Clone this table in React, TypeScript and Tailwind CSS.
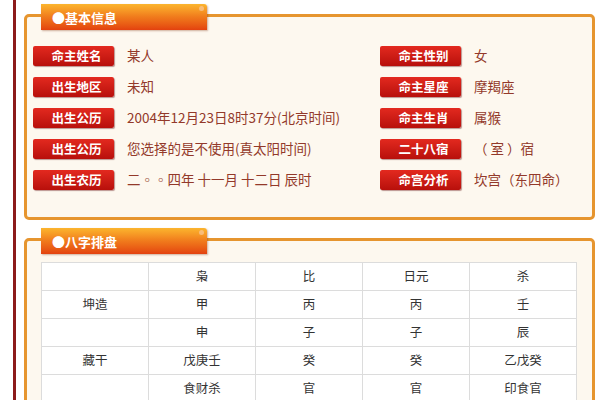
import React from 'react';

const font = { fontFamily: '"Microsoft YaHei", "Noto Sans CJK SC", "Noto Sans", sans-serif' };

const leftRows = [
  { label: '命主姓名', value: '某人' },
  { label: '出生地区', value: '未知' },
  { label: '出生公历', value: '2004年12月23日8时37分(北京时间)' },
  { label: '出生公历', value: '您选择的是不使用(真太阳时间)' },
  { label: '出生农历', value: '二◦◦四年 十一月 十二日 辰时' },
];

const rightRows = [
  { label: '命主性别', value: '女' },
  { label: '命主星座', value: '摩羯座' },
  { label: '命主生肖', value: '属猴' },
  { label: '二十八宿', value: '（ 室 ）宿' },
  { label: '命宫分析', value: '坎宫（东四命）' },
];

const table = [
  ['', '枭', '比', '日元', '杀'],
  ['坤造', '甲', '丙', '丙', '壬'],
  ['', '申', '子', '子', '辰'],
  ['藏干', '戊庚壬', '癸', '癸', '乙戊癸'],
  ['', '食财杀', '官', '官', '印食官'],
];

// orange tab sitting on the panel's top border
const Tab = ({ title }: { title: string }) => (
  <div className="absolute left-[14px] top-[-13px] w-[166px] h-[26px] rounded-tr-[3px] bg-gradient-to-b from-[#fbb52e] via-[#f07a1c] to-[#e3410f] shadow-[1px_1px_2px_rgba(120,40,0,0.35)] flex items-center pl-[11px]">
    <span className="text-white font-bold text-[13px] leading-none">●{title}</span>
    <span className="absolute right-[3px] top-[2px] w-[5px] h-[5px] rounded-full bg-[#f9c89a]/70"></span>
  </div>
);

const Label = ({ text }: { text: string }) => (
  <div className="w-[81px] h-[20px] shrink-0 rounded-[2px] bg-gradient-to-b from-[#e3291f] to-[#b80f0b] shadow-[1px_1px_1px_rgba(90,0,0,0.4)] flex items-center justify-center pl-[6px]">
    <span className="text-white font-bold text-[12.5px] leading-none">{text}</span>
  </div>
);

const Row = ({ label, value }: { label: string; value: string }) => (
  <div className="flex items-center h-[20px]">
    <Label text={label} />
    <span className="ml-[13px] text-[13.5px] text-[#93392a] whitespace-nowrap leading-none">{value}</span>
  </div>
);

export default function App() {
  return (
    <div className="w-[600px] h-[400px] overflow-hidden bg-white" style={font}>
      <div className="ml-[13px] h-full border-l-[3px] border-[#8c1b1b] pl-[8px] pt-[14px]">
        {/* 基本信息 */}
        <div className="relative w-[571px] h-[206px] border-[3px] border-[#e6952f] rounded-[5px] bg-[#fdf8ef]">
          <Tab title="基本信息" />
          <div className="flex pt-[29px] pl-[6px]">
            <div className="w-[347px] flex flex-col gap-[11px]">
              {leftRows.map((r, i) => (
                <Row key={i} label={r.label} value={r.value} />
              ))}
            </div>
            <div className="flex flex-col gap-[11px]">
              {rightRows.map((r, i) => (
                <Row key={i} label={r.label} value={r.value} />
              ))}
            </div>
          </div>
        </div>

        {/* 八字排盘 */}
        <div className="relative mt-[18px] w-[571px] h-[200px] border-[3px] border-[#e6952f] rounded-[5px] bg-[#fdf8ef]">
          <Tab title="八字排盘" />
          <div className="pt-[21px] pl-[14px]">
            <table className="w-[536px] border-collapse bg-white table-fixed">
              <tbody>
                {table.map((row, i) => (
                  <tr key={i} className="h-[28px]">
                    {row.map((c, j) => (
                      <td key={j} className="border border-[#dcdcdc] text-center text-[12.5px] text-[#333] p-0">
                        {c}
                      </td>
                    ))}
                  </tr>
                ))}
              </tbody>
            </table>
          </div>
        </div>
      </div>
    </div>
  );
}
